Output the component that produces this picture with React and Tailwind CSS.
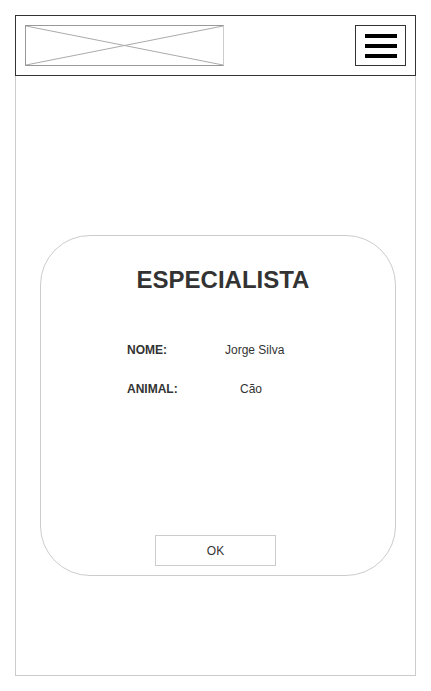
import React from 'react'

function ImagePlaceholder() {
  return (
    <div className="relative w-[199px] h-[41px] border border-[#999] border-r-[#ccc]">
      <svg className="absolute inset-0 w-full h-full" viewBox="0 0 197 39" preserveAspectRatio="none">
        <line x1="0" y1="0" x2="197" y2="39" stroke="#aaa" strokeWidth="1" />
        <line x1="0" y1="39" x2="197" y2="0" stroke="#aaa" strokeWidth="1" />
      </svg>
    </div>
  )
}

function MenuButton() {
  return (
    <div className="w-[51px] h-[41px] border border-[#333] flex flex-col items-center justify-center gap-[6px]">
      <span className="block w-[32px] h-[4px] bg-black" />
      <span className="block w-[32px] h-[4px] bg-black" />
      <span className="block w-[32px] h-[4px] bg-black" />
    </div>
  )
}

export default function App() {
  return (
    <div className="bg-white w-[431px] h-[691px] pt-[15px] pl-[15px] font-['Liberation_Sans',Arial,sans-serif] text-[#333]">
      <div className="w-[401px] h-[661px] border-x border-b border-[#ccc] flex flex-col">
        <header className="-mx-px h-[61px] border border-[#333] flex items-center justify-between px-[9px]">
          <ImagePlaceholder />
          <MenuButton />
        </header>

        <section className="ml-[24px] mt-[159px] w-[356px] h-[341px] border border-[#ccc] rounded-[50px] flex flex-col pt-[30px] pb-[9px]">
          <h1 className="pl-[10px] text-center text-[24px] leading-[28px] font-bold">ESPECIALISTA</h1>

          <div className="mt-[48px] ml-[86px] flex flex-col gap-[23px] text-[12px] leading-[16px]">
            <div className="flex">
              <span className="w-[98px] font-bold">NOME:</span>
              <span>Jorge Silva</span>
            </div>
            <div className="flex">
              <span className="w-[98px] font-bold">ANIMAL:</span>
              <span className="pl-[15px]">Cão</span>
            </div>
          </div>

          <div className="flex-1" />

          <button className="ml-[114px] w-[121px] h-[31px] border border-[#ccc] text-[12px] text-[#333] bg-white">
            OK
          </button>
        </section>
      </div>
    </div>
  )
}
